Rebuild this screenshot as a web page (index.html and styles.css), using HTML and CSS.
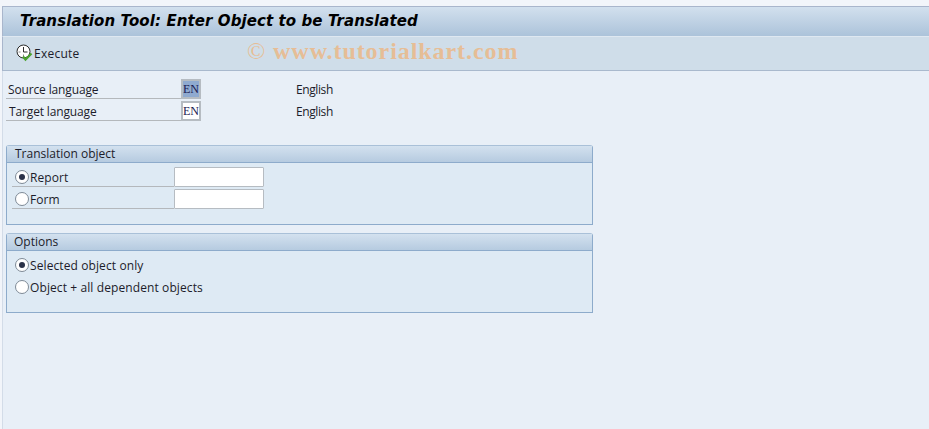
FILE: index.html
```html
<!DOCTYPE html>
<html lang="en">
<head>
    <meta charset="UTF-8">
    <meta name="viewport" content="width=device-width, initial-scale=1.0">
    <title>Translation Tool: Enter Object to be Translated</title>
    <link rel="stylesheet" href="styles.css">
</head>
<body>
    <div class="window">
        <div class="title-bar">
            <h1>Translation Tool: Enter Object to be Translated</h1>
        </div>
        <div class="toolbar">
            <button class="tool-button">
                <svg class="execute-icon" width="18" height="18" viewBox="0 0 18 18">
                    <circle cx="7.5" cy="7.5" r="6.5" fill="#fff" stroke="#2b2b2b" stroke-width="1"/>
                    <path d="M7.5 3V8H11.5" fill="none" stroke="#2b2b2b" stroke-width="1"/>
                    <path d="M2.5 8h2M7.5 10.5V13" stroke="#8a8a8a" stroke-width="1"/>
                    <path d="M7 12.5l2.5 3 6-6" fill="none" stroke="#4aa32f" stroke-width="2.2"/>
                </svg>
                Execute
            </button>
            <div class="watermark"><span class="copyright">©</span> www.tutorialkart.com</div>
        </div>
        <div class="content">
            <div class="field-row">
                <label class="field-label">Source language</label>
                <span class="key-input selected">EN</span>
                <span class="field-value">English</span>
            </div>
            <div class="field-row">
                <label class="field-label target">Target language</label>
                <span class="key-input">EN</span>
                <span class="field-value">English</span>
            </div>

            <div class="group first">
                <div class="group-title">Translation object</div>
                <div class="group-body">
                    <div class="radio-row">
                        <div class="radio-cell">
                            <span class="radio checked"></span>
                            <span class="radio-label">Report</span>
                        </div>
                        <span class="text-input"></span>
                    </div>
                    <div class="radio-row">
                        <div class="radio-cell">
                            <span class="radio"></span>
                            <span class="radio-label">Form</span>
                        </div>
                        <span class="text-input"></span>
                    </div>
                </div>
            </div>

            <div class="group">
                <div class="group-title options">Options</div>
                <div class="group-body options-body">
                    <div class="radio-row">
                        <span class="radio checked"></span>
                        <span class="radio-label">Selected object only</span>
                    </div>
                    <div class="radio-row">
                        <span class="radio"></span>
                        <span class="radio-label">Object + all dependent objects</span>
                    </div>
                </div>
            </div>
        </div>
    </div>
</body>
</html>
```

FILE: styles.css
```css
html, body {
    height: 100%;
}
body {
    margin: 0;
    background-color: #f2f5fa;
    font-family: "Open Sans", "Noto Sans", sans-serif;
    font-size: 12px;
    color: #1c1c2a;
    overflow: hidden;
}
.window {
    height: 100%;
    box-sizing: border-box;
    margin-left: 2px;
    padding-top: 6px;
    display: flex;
    flex-direction: column;
}
.title-bar {
    height: 31px;
    box-sizing: border-box;
    border-top: 1px solid #a9b6cc;
    border-left: 1px solid #a9b6cc;
    border-bottom: 1px solid #dfe8f1;
    background: linear-gradient(#d2e0ee, #acc3da);
    padding: 0 0 2px 17px;
    display: flex;
    align-items: center;
}
h1 {
    margin: 0;
    font-family: "DejaVu Sans", sans-serif;
    font-size: 15px;
    font-weight: bold;
    font-style: italic;
    letter-spacing: 0.09px;
    color: #000;
    white-space: nowrap;
}
.toolbar {
    position: relative;
    height: 34px;
    box-sizing: border-box;
    border-left: 1px solid #a9b6cc;
    border-bottom: 1px solid #a9b9cd;
    background-color: #cfdde9;
    padding-left: 13px;
    display: flex;
    align-items: center;
}
.tool-button {
    border: none;
    background: none;
    padding: 0;
    font: inherit;
    letter-spacing: 0.25px;
    color: inherit;
    display: flex;
    align-items: center;
    cursor: pointer;
}
.execute-icon {
    display: block;
    margin-top: -2px;
}
.watermark {
    position: absolute;
    left: 244px;
    top: 1px;
    font-family: "Liberation Serif", serif;
    font-size: 24px;
    font-weight: bold;
    letter-spacing: 0.93px;
    color: #e6bd96;
    white-space: nowrap;
}
.copyright {
    font-weight: normal;
}
.content {
    flex: 1;
    border-left: 1px solid #d3dce8;
    background-color: #e8eff7;
    padding: 7px 0 0 3px;
}
.field-row {
    height: 22px;
    display: flex;
    align-items: center;
}
.field-label {
    width: 175px;
    height: 21px;
    line-height: 23px;
    box-sizing: border-box;
    padding-left: 2px;
    border-bottom: 1px solid #b4b8bc;
    letter-spacing: -0.14px;
    align-self: flex-start;
}
.field-label.target {
    padding-left: 3px;
}
.key-input {
    width: 20px;
    height: 20px;
    box-sizing: border-box;
    border: 2px solid #b6bcc2;
    background-color: #fff;
    font-family: "Liberation Serif", serif;
    font-size: 12px;
    line-height: 16px;
    text-align: center;
    white-space: nowrap;
    color: #1a1a50;
    margin-top: -1px;
}
.key-input.selected {
    background-color: #8faad0;
}
.field-value {
    margin-left: 95px;
    letter-spacing: -0.4px;
}
.group {
    width: 587px;
    height: 80px;
    box-sizing: border-box;
    margin-top: 8px;
    border: 1px solid #8dabcb;
    border-top-color: #a9c0d8;
    border-radius: 3px 3px 0 0;
    background-color: #deeaf4;
}
.group.first {
    margin-top: 23px;
}
.group-title {
    height: 17px;
    line-height: 16px;
    box-sizing: border-box;
    border-bottom: 1px solid #8dabcb;
    background: linear-gradient(#d3e1ef, #b6cbe0);
    padding-left: 8px;
}
.group-title.options {
    padding-left: 7px;
}
.group-body {
    padding: 4px 0 0 5px;
}
.group-body.options-body {
    padding-top: 3px;
}
.radio-row {
    height: 22px;
    display: flex;
    align-items: center;
}
.radio-cell {
    width: 162px;
    height: 20px;
    box-sizing: border-box;
    padding-top: 1px;
    border-bottom: 1px solid #b4b8bc;
    display: flex;
    align-items: center;
    align-self: flex-start;
}
.radio {
    width: 14px;
    height: 14px;
    box-sizing: border-box;
    border: 1px solid #7e8a96;
    border-radius: 50%;
    background-color: #fff;
    margin-left: 3px;
    display: flex;
    align-items: center;
    justify-content: center;
}
.radio.checked::after {
    content: "";
    width: 6px;
    height: 6px;
    border-radius: 50%;
    background-color: #2a3148;
}
.radio-label {
    margin-left: 1px;
    letter-spacing: 0.1px;
}
.text-input {
    width: 90px;
    height: 20px;
    box-sizing: border-box;
    border: 1px solid #b6bcc2;
    border-radius: 1px;
    background-color: #fff;
    align-self: flex-start;
}
```
